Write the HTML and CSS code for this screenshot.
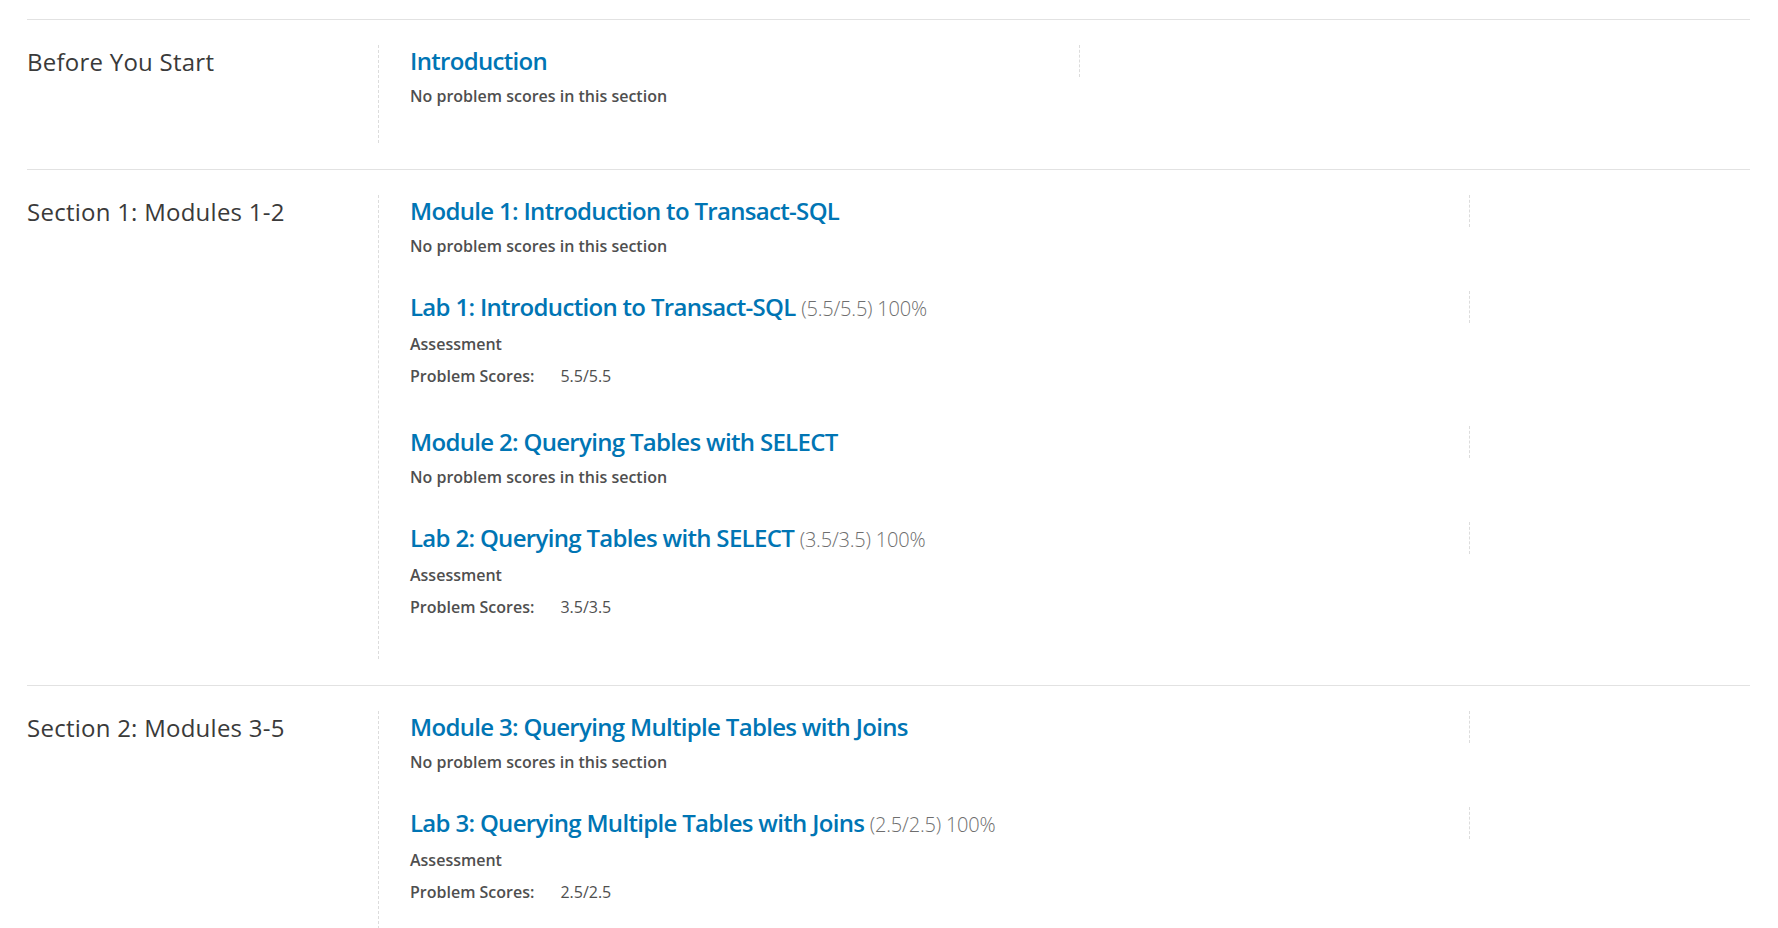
FILE: index.html
```html
<!DOCTYPE html>
<html lang="en">
<head>
<meta charset="utf-8">
<title>Course Progress</title>
<link rel="stylesheet" href="styles.css">
</head>
<body>
<div class="progress">
  <section class="chapter">
    <h2 class="chapter-title">Before You Start</h2>
    <div class="sections sections--narrow">
      <div class="item">
        <div class="item-head">
          <h3 class="item-title"><a href="#">Introduction</a></h3>
          <span class="graph"></span>
        </div>
        <p class="note">No problem scores in this section</p>
      </div>
    </div>
  </section>

  <section class="chapter">
    <h2 class="chapter-title">Section 1: Modules 1-2</h2>
    <div class="sections sections--wide">
      <div class="item">
        <div class="item-head">
          <h3 class="item-title"><a href="#">Module 1: Introduction to Transact-SQL</a></h3>
          <span class="graph"></span>
        </div>
        <p class="note">No problem scores in this section</p>
      </div>
      <div class="item">
        <div class="item-head">
          <h3 class="item-title"><a href="#">Lab 1: Introduction to Transact-SQL</a> <span class="score">(5.5/5.5) 100%</span></h3>
          <span class="graph"></span>
        </div>
        <p class="kind">Assessment</p>
        <dl class="scores">
          <dt>Problem Scores:</dt>
          <dd>5.5/5.5</dd>
        </dl>
      </div>
      <div class="item">
        <div class="item-head">
          <h3 class="item-title"><a href="#">Module 2: Querying Tables with SELECT</a></h3>
          <span class="graph"></span>
        </div>
        <p class="note">No problem scores in this section</p>
      </div>
      <div class="item">
        <div class="item-head">
          <h3 class="item-title"><a href="#">Lab 2: Querying Tables with SELECT</a> <span class="score">(3.5/3.5) 100%</span></h3>
          <span class="graph"></span>
        </div>
        <p class="kind">Assessment</p>
        <dl class="scores">
          <dt>Problem Scores:</dt>
          <dd>3.5/3.5</dd>
        </dl>
      </div>
    </div>
  </section>

  <section class="chapter">
    <h2 class="chapter-title">Section 2: Modules 3-5</h2>
    <div class="sections sections--wide">
      <div class="item">
        <div class="item-head">
          <h3 class="item-title"><a href="#">Module 3: Querying Multiple Tables with Joins</a></h3>
          <span class="graph"></span>
        </div>
        <p class="note">No problem scores in this section</p>
      </div>
      <div class="item">
        <div class="item-head">
          <h3 class="item-title"><a href="#">Lab 3: Querying Multiple Tables with Joins</a> <span class="score">(2.5/2.5) 100%</span></h3>
          <span class="graph"></span>
        </div>
        <p class="kind">Assessment</p>
        <dl class="scores">
          <dt>Problem Scores:</dt>
          <dd>2.5/2.5</dd>
        </dl>
      </div>
    </div>
  </section>
</div>
</body>
</html>
```

FILE: styles.css
```css
html, body {
  margin: 0;
  padding: 0;
  background: #ffffff;
}

body {
  font-family: "Open Sans", "Noto Sans", sans-serif;
  color: #4f4f4f;
}

.progress {
  padding: 19px 28px 0 27px;
}

.chapter {
  display: flex;
  align-items: stretch;
  border-top: 1px solid #e2e2e2;
  padding: 25px 0 26px;
}

.chapter-title {
  flex: none;
  width: 351px;
  margin: 0;
  font-size: 24px;
  font-weight: 400;
  line-height: normal;
  letter-spacing: 0.25px;
  color: #3a3a3a;
}

.sections {
  box-sizing: border-box;
  flex: none;
  border-left: 1px dashed #dcdcdc;
  padding: 0 0 2px 31px;
}

.sections--narrow {
  width: 702px;
}

.sections--wide {
  width: 1092px;
}

.item {
  margin-bottom: 35px;
}

.item-head {
  display: flex;
  align-items: flex-start;
}

.item-title {
  flex: 1;
  margin: 0;
  font-size: 24px;
  line-height: 32px;
  font-weight: 600;
  letter-spacing: -0.68px;
}

.item-title a {
  color: #0075b4;
  text-decoration: none;
}

.score {
  font-size: 20px;
  line-height: 1;
  font-weight: 300;
  letter-spacing: -0.2px;
  color: #6e6e6e;
}

.graph {
  flex: none;
  width: 0;
  height: 32px;
  border-left: 1px dashed #dcdcdc;
}

.note {
  margin: 9px 0 0;
  font-size: 16px;
  line-height: 20px;
  font-weight: 600;
  color: #4f4f4f;
}

.kind {
  margin: 11px 0 0;
  font-size: 16px;
  line-height: 20px;
  font-weight: 600;
  color: #4f4f4f;
}

.scores {
  display: flex;
  margin: 12px 0 0;
  padding-bottom: 5px;
  font-size: 16px;
  line-height: 20px;
  color: #4f4f4f;
}

.scores dt {
  font-weight: 600;
}

.scores dd {
  margin: 0 0 0 26px;
  font-weight: 400;
}
```
